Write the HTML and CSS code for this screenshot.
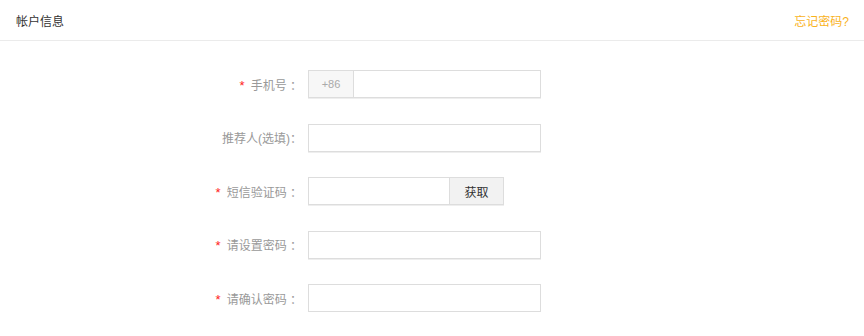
FILE: index.html
```html
<!DOCTYPE html>
<html lang="zh-CN">
<head>
  <meta charset="UTF-8">
  <title>帐户信息</title>
  <link rel="stylesheet" href="styles.css">
</head>
<body>

  <div class="header">
    <span class="title">帐户信息</span>
    <a class="forget" href="#">忘记密码?</a>
  </div>

  <div class="form">
    <div class="row">
      <label class="label"><span class="star">*</span>手机号 ：</label>
      <div class="field phone">
        <span class="prefix">+86</span>
        <input type="text">
      </div>
    </div>

    <div class="row">
      <label class="label">推荐人(选填)：</label>
      <div class="field">
        <input type="text">
      </div>
    </div>

    <div class="row">
      <label class="label"><span class="star">*</span>短信验证码 ：</label>
      <div class="field code">
        <input type="text">
        <button class="get">获取</button>
      </div>
    </div>

    <div class="row">
      <label class="label"><span class="star">*</span>请设置密码 ：</label>
      <div class="field">
        <input type="password">
      </div>
    </div>

    <div class="row">
      <label class="label"><span class="star">*</span>请确认密码 ：</label>
      <div class="field">
        <input type="password">
      </div>
    </div>
  </div>

</body>
</html>
```

FILE: styles.css
```css
body {
  margin: 0;
  background: #fff;
  font-family: "Liberation Sans", "Noto Sans CJK SC", sans-serif;
  font-size: 12px;
  color: #999;
}

/* Top bar */
.header {
  height: 40px;
  border-bottom: 1px solid #ebebeb;
  display: flex;
  align-items: center;
  justify-content: space-between;
  padding: 0 15px 0 16px;
}

.title {
  color: #333;
  font-size: 12px;
}

.forget {
  color: #f9b21c;
  text-decoration: none;
  font-size: 12px;
}

/* Form */
.form {
  display: flex;
  flex-direction: column;
  gap: 25.5px;
  padding-top: 29px;
}

.row {
  display: flex;
  align-items: center;
  height: 28px;
}

.label {
  width: 308px;
  text-align: right;
  padding-right: 6px;
  box-sizing: border-box;
  color: #999;
  white-space: nowrap;
}

.star {
  color: #f22;
  font-size: 13px;
  margin-right: 6px;
}

.field {
  display: flex;
  width: 233px;
  height: 28px;
  box-sizing: border-box;
  border: 1px solid #ddd;
  box-shadow: 0 1px 0 #eee;
}

.field input {
  flex: 1;
  min-width: 0;
  border: none;
  outline: none;
  padding: 0 8px;
  font-size: 12px;
  background: #fff;
}

.prefix {
  width: 44px;
  background: #f7f7f7;
  border-right: 1px solid #ddd;
  display: flex;
  align-items: center;
  justify-content: center;
  color: #aaa;
  font-size: 11px;
}

.code {
  width: 196px;
}

.get {
  width: 54px;
  border: none;
  border-left: 1px solid #ddd;
  background: #f2f2f2;
  color: #333;
  font-size: 12px;
  font-family: inherit;
  padding: 0;
}
```
